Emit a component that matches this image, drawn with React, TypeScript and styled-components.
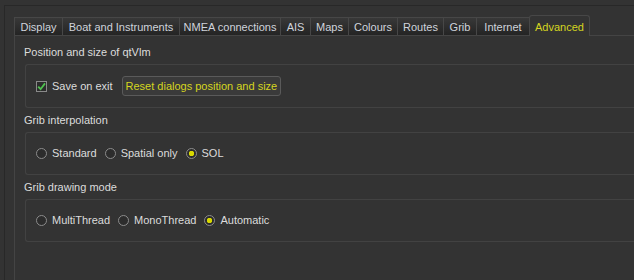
import React from 'react';
import styled, {createGlobalStyle} from 'styled-components';

// tab label and its width in the tab bar
const tabs: Array<[string, number]> = [
    ['Display', 48],
    ['Boat and Instruments', 117],
    ['NMEA connections', 101],
    ['AIS', 30],
    ['Maps', 38],
    ['Colours', 49],
    ['Routes', 46],
    ['Grib', 33],
    ['Internet', 53],
    ['Advanced', 61],
]

export default function App() {
    return (
        <>
            <GlobalStyle/>
            <Frame>
                <TabBar>
                    {tabs.map(([t, w]) => (
                        <Tab key={t} $w={w} $active={t === 'Advanced'}>{t}</Tab>
                    ))}
                </TabBar>
                <Pane>
                    {/*Position and size*/}
                    <GroupTitle>Position and size of qtVlm</GroupTitle>
                    <GroupBox>
                        <Option>
                            <CheckBox>
                                <svg width="9" height="9" viewBox="0 0 9 9">
                                    <path d="M1.2 4.6 L3.6 7.2 L8 1.4" fill="none" stroke="#4fc24f" strokeWidth="1.8"/>
                                </svg>
                            </CheckBox>
                            Save on exit
                        </Option>
                        <PushButton>Reset dialogs position and size</PushButton>
                    </GroupBox>

                    {/*Grib interpolation*/}
                    <GroupTitle $gap>Grib interpolation</GroupTitle>
                    <GroupBox>
                        <Option><Radio/>Standard</Option>
                        <Option><Radio/>Spatial only</Option>
                        <Option><Radio $checked/>SOL</Option>
                    </GroupBox>

                    {/*Grib drawing mode*/}
                    <GroupTitle $gap>Grib drawing mode</GroupTitle>
                    <GroupBox>
                        <Option><Radio/>MultiThread</Option>
                        <Option><Radio/>MonoThread</Option>
                        <Option><Radio $checked/>Automatic</Option>
                    </GroupBox>
                </Pane>
            </Frame>
        </>
    )
}

// Styles
const GlobalStyle = createGlobalStyle`
  html, body {
    margin: 0;
    height: 100%;
    overflow: hidden;
    background: #333333;
  }

  body {
    font-family: "Liberation Sans", Arial, sans-serif;
    font-size: 11px;
    color: #dcdcdc;
  }
`

const Frame = styled.div`
  display: flex;
  flex-direction: column;
  box-sizing: border-box;
  margin: 5px 0 0 4px;
  padding: 9px 0 0 9px;
  height: calc(100vh - 5px);
  border-top: 1px solid #282828;
  border-left: 1px solid #282828;
`

const TabBar = styled.div`
  display: flex;
  align-items: flex-end;
  height: 20px;
`

const Tab = styled.div<{ $active?: boolean, $w: number }>`
  position: relative;
  display: flex;
  align-items: center;
  justify-content: center;
  box-sizing: border-box;
  width: ${p => p.$w}px;
  height: ${p => p.$active ? 21 : 18}px;
  margin-bottom: ${p => p.$active ? -1 : 0}px;
  padding-top: ${p => p.$active ? 1 : 0}px;
  border: 1px solid #474747;
  border-bottom: none;
  border-right: ${p => p.$active ? '1px solid #474747' : 'none'};
  border-radius: ${p => p.$active ? '3px 3px 0 0' : '0'};
  background: ${p => p.$active ? '#333333' : 'linear-gradient(#383838, #242424)'};
  color: ${p => p.$active ? '#d5d520' : '#d0d4dc'};
  z-index: ${p => p.$active ? 1 : 0};
  white-space: nowrap;
`

const Pane = styled.div`
  flex: 1;
  padding: 9px 0 0 10px;
  border-top: 1px solid #444444;
  border-left: 1px solid #444444;
`

const GroupTitle = styled.div<{ $gap?: boolean }>`
  line-height: 15px;
  margin-top: ${p => p.$gap ? 5 : 0}px;
  margin-bottom: 4px;
  margin-left: -1px;
`

const GroupBox = styled.div`
  display: flex;
  align-items: center;
  gap: 8px;
  box-sizing: border-box;
  min-height: 43px;
  padding: 11px 10px;
  border: 1px solid #424242;
  border-right: none;
  border-radius: 3px 0 0 3px;
`

const Option = styled.label`
  display: flex;
  align-items: center;
  gap: 5px;
  line-height: 15px;
`

const CheckBox = styled.span`
  display: flex;
  align-items: center;
  justify-content: center;
  box-sizing: border-box;
  width: 11px;
  height: 11px;
  border: 1px solid #8a8a8a;
  background: #2c2c2c;
`

const Radio = styled.span<{ $checked?: boolean }>`
  box-sizing: border-box;
  width: 11px;
  height: 11px;
  border: 1px solid #8c8c8c;
  border-radius: 50%;
  background: ${p => p.$checked
          ? 'radial-gradient(circle, #d8d800 0 2.5px, #2c2c2c 3px)'
          : '#2c2c2c'};
`

const PushButton = styled.div`
  display: flex;
  align-items: center;
  box-sizing: border-box;
  height: 20px;
  margin-left: 1px;
  padding: 0 3px;
  border: 1px solid #5a5a5a;
  border-radius: 3px;
  background: #3a3a3a;
  color: #d5d520;
  white-space: nowrap;
`
